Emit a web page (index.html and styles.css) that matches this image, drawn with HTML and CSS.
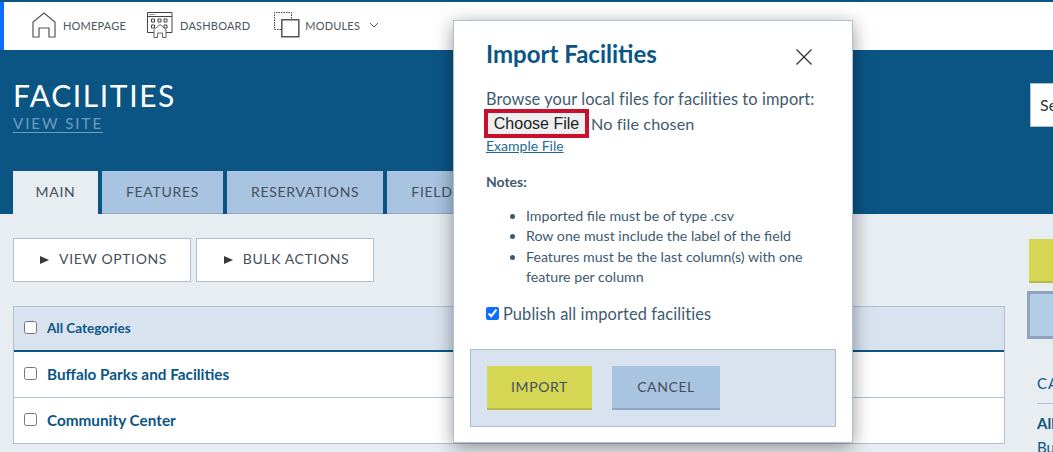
FILE: index.html
```html
<!DOCTYPE html>
<html lang="en">
<head>
    <meta charset="UTF-8">
    <meta name="viewport" content="width=device-width, initial-scale=1.0">
    <title>Facilities</title>
    <link rel="stylesheet" href="styles.css">
</head>
<body>
    <div class="page">
        <div class="top-strip"></div>
        <nav class="topbar">
            <a class="nav-item nav-home">
                <svg width="24" height="26" viewBox="0 0 24 26" fill="none" stroke="#555" stroke-width="1.2">
                    <path d="M1 25V10L12 1l11 9v15h-6v-9H7v9z"/>
                </svg>
                HOMEPAGE
            </a>
            <a class="nav-item nav-dash">
                <svg width="26" height="26" viewBox="0 0 26 26" fill="none" stroke="#444" stroke-width="1">
                    <path d="M7 20.500H.5V.5h24.500v20h-6M.5 4.500h24.500"/>
                    <path d="M2.500 2.500h1M4.500 2.500h1M6.500 2.500h1"/>
                    <path d="M4.500 7h3v3h-3zM11 7h3v3h-3zM17 7h3v3h-3zM4.500 13h3v3h-3zM17 13h3v3h-3z"/>
                    <path d="M7 25.500v-8l6-5 6 5v8h-3.500v-4.500h-5v4.500z" fill="#fff" stroke="#666"/>
                </svg>
                DASHBOARD
            </a>
            <a class="nav-item nav-modules">
                <svg width="26" height="26" viewBox="0 0 26 26" fill="none" stroke="#444">
                    <path d="M7 17.500H.5V.5h17V7" stroke-dasharray="1.500 1"/>
                    <path d="M7.800 7.800h17v17h-17z" stroke="#555" stroke-width="1.500"/>
                </svg>
                MODULES
                <svg class="chevron" width="10" height="6" viewBox="0 0 10 6" fill="none" stroke="#555">
                    <path d="M1 1l4 4 4-4"/>
                </svg>
            </a>
        </nav>

        <header class="hero">
            <div class="hero-top">
                <div>
                    <h1>FACILITIES</h1>
                    <a class="view-site">VIEW SITE</a>
                </div>
                <div class="search">Search</div>
            </div>
            <div class="tabs">
                <a class="tab active">MAIN</a>
                <a class="tab">FEATURES</a>
                <a class="tab">RESERVATIONS</a>
                <a class="tab">FIELDS</a>
            </div>
        </header>

        <main class="content">
            <section class="list-col">
                <div class="actions">
                    <button class="toggle"><span class="arrow"></span>VIEW OPTIONS</button>
                    <button class="toggle"><span class="arrow"></span>BULK ACTIONS</button>
                </div>
                <div class="category-table">
                    <label class="row head"><input type="checkbox">All Categories</label>
                    <label class="row"><input type="checkbox">Buffalo Parks and Facilities</label>
                    <label class="row"><input type="checkbox">Community Center</label>
                </div>
            </section>
            <aside class="side">
                <div class="side-yellow"></div>
                <div class="side-blue"></div>
                <div class="side-title">CATEGORIES</div>
                <div class="side-all">All</div>
                <div class="side-link">Buffalo</div>
            </aside>
        </main>
    </div>

    <div class="modal">
        <h2>Import Facilities</h2>
        <svg class="close" width="16" height="16" viewBox="0 0 16 16" fill="none" stroke="#333" stroke-width="1.300">
            <path d="M0.500 0.500l15 15M15.500 0.500l-15 15"/>
        </svg>
        <p class="browse">Browse your local files for facilities to import:</p>
        <div class="file-row">
            <button class="choose">Choose File</button>
            <span>No file chosen</span>
        </div>
        <a class="example">Example File</a>
        <p class="notes-title">Notes:</p>
        <ul class="notes">
            <li>Imported file must be of type .csv</li>
            <li>Row one must include the label of the field</li>
            <li>Features must be the last column(s) with one feature per column</li>
        </ul>
        <label class="publish"><input type="checkbox" checked>Publish all imported facilities</label>
        <div class="modal-footer">
            <button class="btn btn-import">IMPORT</button>
            <button class="btn btn-cancel">CANCEL</button>
        </div>
    </div>
</body>
</html>
```
FILE: styles.css
```css
html, body {
    margin: 0;
    height: 452px;
    overflow: hidden;
}

body {
    font-family: 'Lato', 'Noto Sans', sans-serif;
    background: #e8edf2;
    color: #0b5585;
    position: relative;
}

.top-strip {
    height: 2px;
    background: #0b5585;
}

.topbar {
    display: flex;
    align-items: center;
    height: 48px;
    box-sizing: border-box;
    padding: 0 0 2px 28px;
    background: #fff;
    border-left: 4px solid #0d6efd;
}

.nav-item {
    display: flex;
    align-items: center;
    gap: 7px;
    font-size: 11px;
    letter-spacing: 0.200px;
    color: #4a5560;
}

.nav-dash { margin-left: 21px; }
.nav-modules { margin-left: 24px; gap: 5px; }
.chevron { margin-left: 4px; }

.hero {
    background: #0b5585;
    height: 164px;
    display: flex;
    flex-direction: column;
    justify-content: space-between;
    padding-left: 13px;
}

.hero-top {
    display: flex;
    justify-content: space-between;
    padding-top: 27px;
}

.hero h1 {
    margin: 0;
    font-size: 30px;
    font-weight: 400;
    line-height: 36px;
    letter-spacing: 1.600px;
    color: #fff;
}

.view-site {
    display: inline-block;
    font-size: 15px;
    line-height: 18px;
    letter-spacing: 2px;
    color: #6f9dbf;
    border-bottom: 1px solid #6f9dbf;
}

.search {
    width: 23px;
    height: 44px;
    margin-top: 6px;
    box-sizing: border-box;
    background: #fff;
    border: 1px solid #b0bfd2;
    border-right: 0;
    padding-left: 9px;
    font-size: 16px;
    line-height: 42px;
    color: #333;
    overflow: hidden;
    white-space: nowrap;
}

.tabs {
    display: flex;
    gap: 4px;
}

.tab {
    height: 43px;
    box-sizing: border-box;
    padding: 0 24px;
    background: #a8c4e1;
    border-bottom: 1px solid #8ea8c5;
    font-size: 14px;
    line-height: 42px;
    letter-spacing: 0.700px;
    color: #444f5c;
}

.tab.active {
    padding: 0 22.500px;
    background: #e8edf2;
    border-bottom: 0;
}

.content {
    display: grid;
    grid-template-columns: 992px 1fr;
    gap: 22px;
    padding: 24px 0 0 13px;
}

.actions {
    display: flex;
    gap: 5px;
    margin-bottom: 24px;
}

.toggle {
    display: flex;
    align-items: center;
    justify-content: center;
    width: 178px;
    height: 44px;
    padding: 0 0 3px 3px;
    background: #fff;
    border: 1px solid #b0bfd2;
    font-family: inherit;
    font-size: 14px;
    letter-spacing: 0.600px;
    color: #444f5c;
}

.arrow {
    width: 0;
    height: 0;
    margin: 3px 10px 0 0;
    border-left: 9px solid #3a3a3a;
    border-top: 4px solid transparent;
    border-bottom: 4px solid transparent;
}

.category-table {
    border: 1px solid #b0bfd2;
    border-bottom: 0;
    background: #fff;
}

.row {
    display: flex;
    align-items: center;
    height: 46px;
    padding: 0 0 2px 10px;
    box-sizing: border-box;
    border-bottom: 1px solid #b0bfd2;
    font-size: 15.300px;
    font-weight: 700;
}

.row input {
    width: 13px;
    height: 13px;
    margin: 0 10px 0 0;
}

.row.head {
    height: 45px;
    background: #d9e3ef;
    border-bottom: 2px solid #0b5585;
    font-size: 13.500px;
}

.side {
    font-size: 15px;
    overflow: hidden;
}

.side-yellow {
    height: 44px;
    margin: 1px 0 8px 2px;
    box-sizing: border-box;
    background: #d5d654;
    border-bottom: 2px solid #b9b94a;
}

.side-blue {
    height: 48px;
    box-sizing: border-box;
    background: #b3cde6;
    border: 3px solid #8ea3bd;
    border-right: 0;
}

.side-title {
    margin: 35px 0 0 10px;
    padding-bottom: 11px;
    border-bottom: 1px solid #b0bfd2;
    letter-spacing: 1px;
    white-space: nowrap;
}

.side-all {
    margin: 10px 0 0 10px;
    font-weight: 700;
}

.side-link {
    margin: 6px 0 0 10px;
}

/* modal sits over the page */
.modal {
    position: absolute;
    left: 453px;
    top: 20px;
    width: 400px;
    height: 423px;
    box-sizing: border-box;
    padding: 19px 16px 0 32px;
    background: #fff;
    border: 1px solid #b0bfd2;
    box-shadow: 0 4px 18px rgba(0,0,0,0.4);
    color: #3e5a70;
}

.modal h2 {
    margin: 0;
    font-size: 24px;
    font-weight: 700;
    line-height: 28px;
    color: #0b5585;
}

.close {
    position: absolute;
    left: 342px;
    top: 28px;
}

.browse {
    margin: 21px 0 0;
    font-size: 16.400px;
    letter-spacing: 0.100px;
    line-height: 20px;
}

.file-row {
    display: flex;
    align-items: center;
    gap: 6px;
    height: 25px;
    margin-top: 2px;
    font-size: 16.200px;
    letter-spacing: 0.100px;
}

.choose {
    width: 97px;
    height: 21px;
    margin-left: 2px;
    padding: 0;
    background: #efefef;
    border: 0;
    outline: 4px solid #c8102e;
    font-family: 'Liberation Sans', sans-serif;
    font-size: 16px;
    letter-spacing: 0;
    color: #222;
}

.example {
    display: block;
    margin-top: 1px;
    font-size: 14px;
    line-height: 17px;
    color: #1f6a9a;
    text-decoration: underline;
}

.notes-title {
    margin: 19px 0 0;
    font-size: 14px;
    font-weight: 700;
    line-height: 17px;
}

.notes {
    margin: 16px 0 0;
    padding-left: 40px;
    font-size: 14.200px;
    line-height: 20.400px;
}

.publish {
    display: flex;
    align-items: center;
    gap: 4px;
    margin-top: 16px;
    font-size: 16.400px;
    letter-spacing: 0.100px;
    line-height: 20px;
}

.publish input {
    width: 13px;
    height: 13px;
    margin: 0;
    accent-color: #0d6efd;
}

.modal-footer {
    position: absolute;
    left: 16px;
    right: 16px;
    bottom: 15px;
    height: 78px;
    box-sizing: border-box;
    display: flex;
    align-items: flex-start;
    gap: 20px;
    padding: 16px;
    background: #d9e3ef;
    border: 1px solid #b0bfd2;
}

.btn {
    height: 44px;
    padding: 0 0 2px;
    border: 0;
    font-family: inherit;
    font-size: 14px;
    letter-spacing: 0.600px;
    color: #444f5c;
}

.btn-import {
    width: 105px;
    background: #d5d654;
    border-bottom: 2px solid #b9b94a;
}

.btn-cancel {
    width: 108px;
    background: #a8c4e1;
    border-bottom: 2px solid #8ea8c5;
}
```
